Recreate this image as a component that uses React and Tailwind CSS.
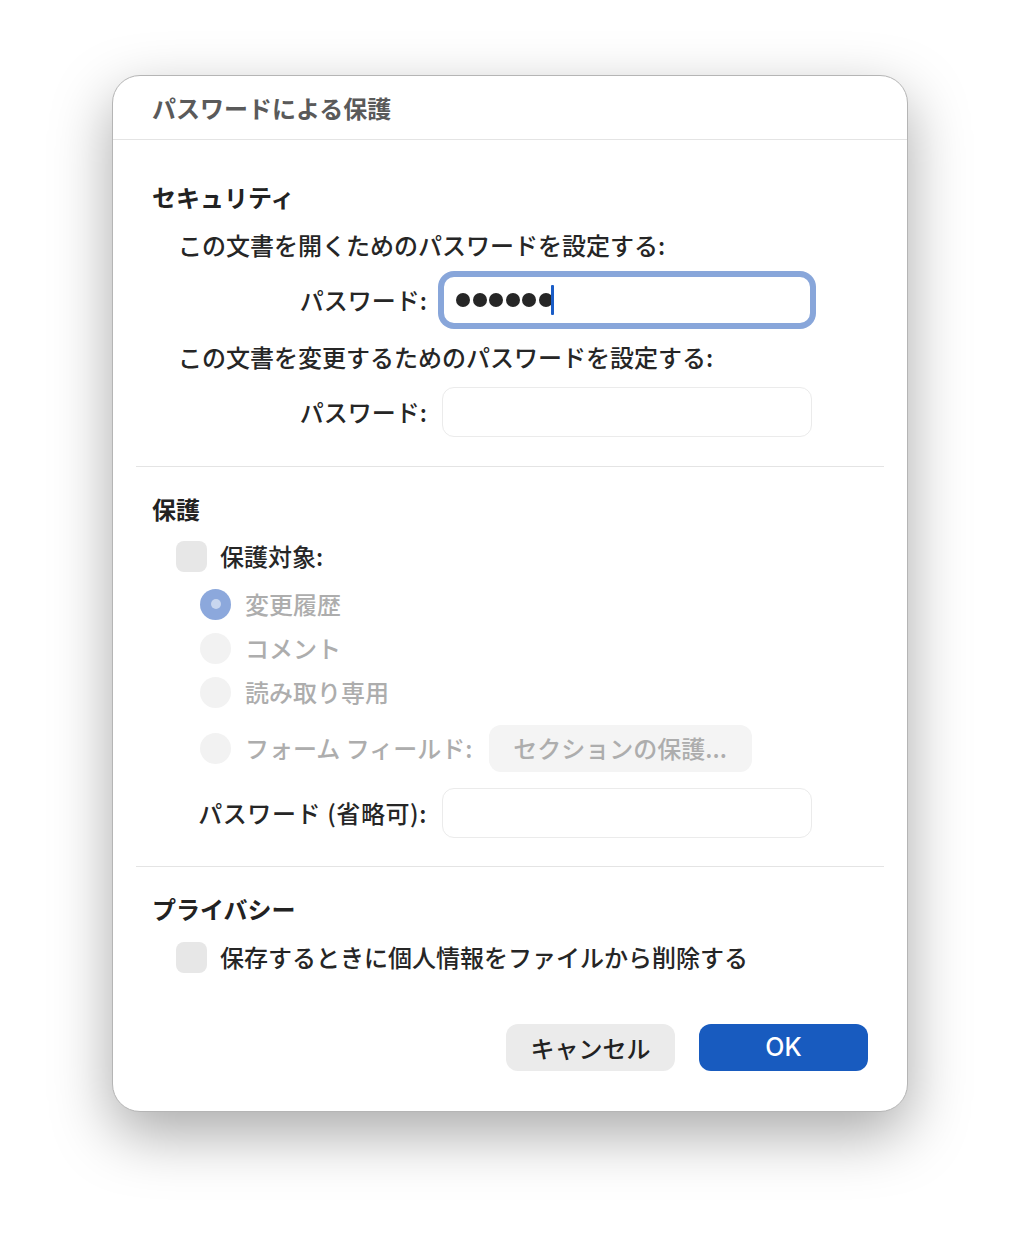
import React from "react";

const font = { fontFamily: '"Noto Sans CJK JP", "Noto Sans", sans-serif' };

function Checkbox() {
  return <div className="w-[31px] h-[31px] rounded-[8px] bg-[#e7e7e7] shrink-0" />;
}

function Radio({ selected }) {
  if (selected) {
    return (
      <div className="w-[31px] h-[31px] rounded-full bg-[#8ca8dc] shrink-0 flex items-center justify-center">
        <div className="w-[10px] h-[10px] rounded-full bg-[#c8d6ef]" />
      </div>
    );
  }
  return <div className="w-[31px] h-[31px] rounded-full bg-[#f2f2f2] shrink-0" />;
}

function FieldRow({ label, h, children, className = "", labelClass = "" }) {
  return (
    <div className={`flex items-center ${h} ${className}`}>
      <div className={`w-[314px] text-right text-[#262626] whitespace-nowrap ${labelClass}`}>{label}</div>
      <div className="ml-[15px]">{children}</div>
    </div>
  );
}

function EmptyInput() {
  return <div className="w-[370px] h-[50px] rounded-[12px] border border-[#ebebeb] bg-white" />;
}

export default function App() {
  return (
    <div className="w-[1020px] h-[1260px] bg-white pt-[75px] pl-[112px]" style={font}>
      <div className="w-[796px] h-[1037px] bg-white rounded-[28px] border border-[#b5b5b5] shadow-[0_22px_60px_rgba(0,0,0,0.34)] overflow-hidden text-[24px] leading-none font-medium">
        {/* Title */}
        <div className="h-[64px] border-b border-[#e4e4e4] flex items-center pl-[39px]">
          <span className="font-bold text-[#5a5a5a]">パスワードによる保護</span>
        </div>

        {/* Security */}
        <div className="pt-[33px]">
          <div className="h-[48px] flex items-center pl-[39px] font-bold text-[#222]">セキュリティ</div>
          <div className="h-[48px] flex items-center pl-[65px] text-[#262626]">この文書を開くためのパスワードを設定する:</div>
          <FieldRow label="パスワード:" h="h-[62px]">
            <div className="w-[370px] h-[50px] rounded-[12px] border-[2px] border-[#88a6da] shadow-[0_0_0_4px_#88a6da] bg-white flex items-center pl-[12px]">
              <div className="flex items-center gap-[2.5px]">
                <span className="w-[14px] h-[14px] rounded-full bg-[#262626]" />
                <span className="w-[14px] h-[14px] rounded-full bg-[#262626]" />
                <span className="w-[14px] h-[14px] rounded-full bg-[#262626]" />
                <span className="w-[14px] h-[14px] rounded-full bg-[#262626]" />
                <span className="w-[14px] h-[14px] rounded-full bg-[#262626]" />
                <span className="w-[14px] h-[14px] rounded-full bg-[#262626]" />
              </div>
              <div className="w-[3px] h-[30px] bg-[#1a5cc6] rounded-[1px] -ml-[2px]" />
            </div>
          </FieldRow>
          <div className="h-[52px] flex items-center pl-[65px] text-[#262626]">この文書を変更するためのパスワードを設定する:</div>
          <FieldRow label="パスワード:" h="h-[58px]">
            <EmptyInput />
          </FieldRow>
        </div>

        <div className="mt-[25px] mx-[23px] h-px bg-[#e4e4e4]" />

        {/* Protection */}
        <div className="mt-[18px]">
          <div className="h-[48px] flex items-center pl-[39px] font-bold text-[#222]">保護</div>
          <div className="h-[46px] flex items-center pl-[63px] gap-[13px]">
            <Checkbox />
            <span className="text-[#262626]">保護対象:</span>
          </div>
          <div className="mt-[3px] h-[44px] flex items-center pl-[87px] gap-[14px]">
            <Radio selected />
            <span className="text-[#adadad]">変更履歴</span>
          </div>
          <div className="h-[44px] flex items-center pl-[87px] gap-[14px]">
            <Radio />
            <span className="text-[#adadad]">コメント</span>
          </div>
          <div className="h-[44px] flex items-center pl-[87px] gap-[14px]">
            <Radio />
            <span className="text-[#adadad]">読み取り専用</span>
          </div>
          <div className="mt-[6px] h-[56px] flex items-center pl-[87px]">
            <Radio />
            <span className="ml-[14px] text-[#adadad] whitespace-nowrap">フォーム フィールド:</span>
            <div className="ml-[17px] w-[263px] h-[47px] rounded-[12px] bg-[#f4f4f4] flex items-center pl-[24px] text-[#adadad] whitespace-nowrap">
              セクションの保護...
            </div>
          </div>
          <FieldRow label="パスワード (省略可):" h="h-[50px]" className="mt-[12px]" labelClass="tracking-[0.6px]">
            <EmptyInput />
          </FieldRow>
        </div>

        <div className="mt-[28px] mx-[23px] h-px bg-[#e4e4e4]" />

        {/* Privacy */}
        <div className="mt-[18px]">
          <div className="h-[48px] flex items-center pl-[39px] font-bold text-[#222]">プライバシー</div>
          <div className="mt-[2px] h-[44px] flex items-center pl-[63px] gap-[13px]">
            <Checkbox />
            <span className="text-[#262626]">保存するときに個人情報をファイルから削除する</span>
          </div>
        </div>

        {/* Buttons */}
        <div className="mt-[45px] flex justify-end gap-[24px] pr-[39px]">
          <button className="w-[169px] h-[47px] rounded-[12px] bg-[#ebebeb] text-[#222] text-[24px] font-medium flex items-center justify-center">
            キャンセル
          </button>
          <button
            className="w-[169px] h-[47px] rounded-[12px] bg-[#185bbf] text-white text-[25px] font-medium flex items-center justify-center"
            style={{ fontFamily: '"Inter", "Liberation Sans", sans-serif' }}
          >
            OK
          </button>
        </div>
      </div>
    </div>
  );
}
